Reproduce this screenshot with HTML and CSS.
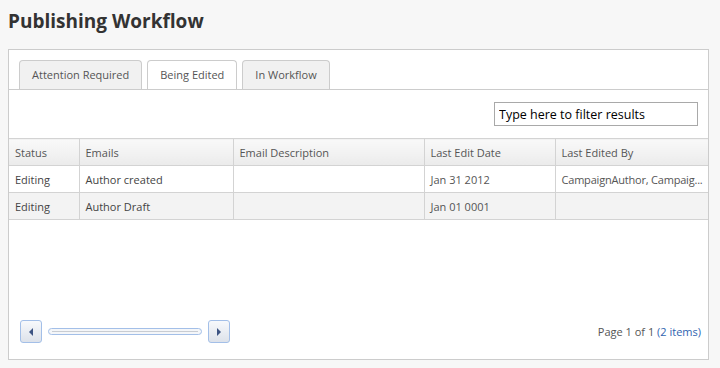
FILE: index.html
```
<!DOCTYPE html>
<html>
<head>
<meta charset="utf-8">
<link rel="stylesheet" href="styles.css">
</head>
<body>
<h1 class="title">Publishing Workflow</h1>
<div class="panel">
  <div class="tabs">
    <div class="tab">Attention Required</div>
    <div class="tab active">Being Edited</div>
    <div class="tab">In Workflow</div>
  </div>
  <div class="filter-row">
    <input class="filter" type="text" value="Type here to filter results">
  </div>
  <table class="grid">
    <colgroup>
      <col class="c1"><col class="c2"><col class="c3"><col class="c4"><col class="c5">
    </colgroup>
    <thead>
      <tr><th>Status</th><th>Emails</th><th>Email Description</th><th>Last Edit Date</th><th>Last Edited By</th></tr>
    </thead>
    <tbody>
      <tr><td>Editing</td><td>Author created</td><td></td><td>Jan 31 2012</td><td><span class="clip">CampaignAuthor, Campaig...</span></td></tr>
      <tr class="alt"><td>Editing</td><td>Author Draft</td><td></td><td>Jan 01 0001</td><td></td></tr>
    </tbody>
  </table>
  <div class="footer">
    <div class="scroller">
      <div class="sbtn"><svg width="6" height="8" viewBox="0 0 6 8"><path d="M5 0 L1 4 L5 8 Z" fill="#3d5483"/></svg></div>
      <div class="track"><div class="thumb"></div></div>
      <div class="sbtn"><svg width="6" height="8" viewBox="0 0 6 8"><path d="M1 0 L5 4 L1 8 Z" fill="#3d5483"/></svg></div>
    </div>
    <div class="pager">Page 1 of 1 <span class="count">(2 items)</span></div>
  </div>
</div>
</body>
</html>
```
FILE: styles.css
```
html, body {
  margin: 0;
  background: #f7f7f7;
}
body {
  padding: 8px 0 0 8px;
  font-family: "Open Sans", "Liberation Sans", sans-serif;
  color: #444;
}
.title {
  margin: 1px 0 16px 0;
  font-size: 19px;
  line-height: 24px;
  font-weight: bold;
  color: #333;
}
.panel {
  box-sizing: border-box;
  width: 701px;
  height: 311px;
  background: #fff;
  border: 1px solid #cccccc;
  display: flex;
  flex-direction: column;
}
.tabs {
  display: flex;
  gap: 5px;
  padding: 10px 10px 0 10px;
  border-bottom: 1px solid #cccccc;
}
.tab {
  height: 28px;
  line-height: 28px;
  padding: 0 12px;
  font-size: 11px;
  color: #555;
  background: #f1f1f1;
  border: 1px solid #cccccc;
  border-bottom: none;
  border-radius: 4px 4px 0 0;
}
.tab.active {
  background: #fff;
}
.filter-row {
  display: flex;
  justify-content: flex-end;
  padding: 12px 10px 12px 0;
}
.filter {
  box-sizing: border-box;
  width: 204px;
  height: 24px;
  margin: 0;
  padding: 0 4px;
  border: 1px solid #a9a9a9;
  font-family: "Open Sans", "Liberation Sans", sans-serif;
  font-size: 12.5px;
  color: #000;
  background: #fff;
  outline: none;
}
.grid {
  width: 100%;
  border-collapse: collapse;
  table-layout: fixed;
  font-size: 11px;
}
.c1 { width: 70px; }
.c2 { width: 154px; }
.c3 { width: 191px; }
.c4 { width: 131px; }
.grid th, .grid td {
  height: 26px;
  padding: 0 6px;
  text-align: left;
  font-weight: normal;
  border-top: 1px solid #d3d3d3;
  border-bottom: 1px solid #d3d3d3;
  border-right: 1px solid #d3d3d3;
  white-space: nowrap;
  overflow: hidden;
  vertical-align: middle;
}
.grid th:last-child, .grid td:last-child {
  border-right: none;
  padding-right: 2px;
}
.grid th {
  color: #555;
  background: linear-gradient(#f9f9f9, #ebebeb);
}
.grid td {
  color: #555;
}
.grid td:first-child, .grid td:nth-child(2) {
  color: #444;
}
.grid tr.alt td {
  background: #f3f3f3;
}
.clip {
  letter-spacing: -0.2px;
}
.footer {
  margin-top: auto;
  display: flex;
  align-items: center;
  justify-content: space-between;
  padding: 0 7px 16px 11px;
}
.scroller {
  display: flex;
  align-items: center;
  gap: 6px;
}
.sbtn {
  box-sizing: border-box;
  width: 22px;
  height: 23px;
  border: 1px solid #a3bfe8;
  border-radius: 3px;
  background: linear-gradient(#f7f9fc, #dde2ea);
  display: flex;
  align-items: center;
  justify-content: center;
}
.track {
  box-sizing: border-box;
  width: 154px;
  height: 7px;
  border: 1px solid #a3bfe8;
  border-radius: 4px;
  background: #f4f6f9;
  display: flex;
  align-items: center;
  padding: 0 3px;
}
.thumb {
  flex: 1;
  height: 1px;
  background: #c8ccd2;
}
.pager {
  font-size: 11px;
  color: #555;
}
.count {
  color: #2f64b0;
}
```
